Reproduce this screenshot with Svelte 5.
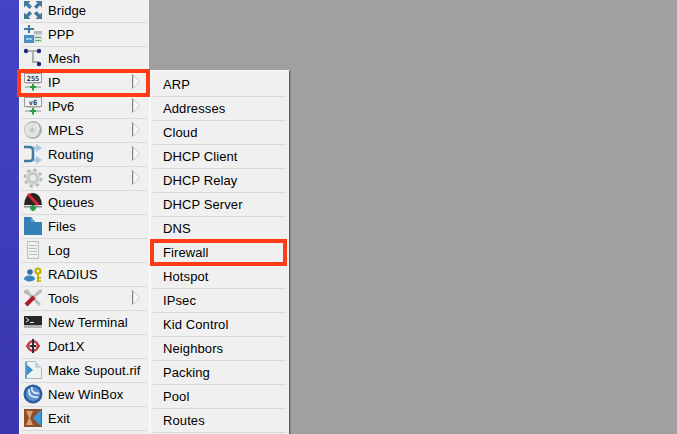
<script>
    // Main menu column, icon is the key into the icon snippet below
    const menu = [
        { label: 'Bridge', icon: 'bridge' },
        { label: 'PPP', icon: 'ppp' },
        { label: 'Mesh', icon: 'mesh' },
        { label: 'IP', icon: 'ip', arrow: true, active: true },
        { label: 'IPv6', icon: 'ipv6', arrow: true },
        { label: 'MPLS', icon: 'mpls', arrow: true },
        { label: 'Routing', icon: 'routing', arrow: true },
        { label: 'System', icon: 'system', arrow: true },
        { label: 'Queues', icon: 'queues' },
        { label: 'Files', icon: 'files' },
        { label: 'Log', icon: 'log' },
        { label: 'RADIUS', icon: 'radius' },
        { label: 'Tools', icon: 'tools', arrow: true },
        { label: 'New Terminal', icon: 'terminal' },
        { label: 'Dot1X', icon: 'dot1x' },
        { label: 'Make Supout.rif', icon: 'supout' },
        { label: 'New WinBox', icon: 'winbox' },
        { label: 'Exit', icon: 'exit' }
    ];

    const submenu = [
        'ARP', 'Addresses', 'Cloud', 'DHCP Client', 'DHCP Relay', 'DHCP Server', 'DNS',
        'Firewall', 'Hotspot', 'IPsec', 'Kid Control', 'Neighbors', 'Packing', 'Pool', 'Routes'
    ];
</script>

{#snippet icon(name)}
    <svg class="icon" width="20" height="20" viewBox="0 0 20 20">
        {#if name === 'bridge'}
            <g fill="#41799e">
                <path d="M1 1h6.500L5.500 3 9 6.500 6.500 9 3 5.500 1 7.500z" />
                <path d="M19 1h-6.500l2 2L11 6.500 13.500 9 17 5.500l2 2z" />
                <path d="M1 19h6.500l-2-2L9 13.500 6.500 11 3 14.500l-2-2z" />
                <path d="M19 19h-6.500l2-2-3.500-3.500 2.500-2.500 3.500 3.500 2-2z" />
            </g>
        {:else if name === 'ppp'}
            <path d="M5 1h2v3h4v2H7v3H5V6H1V4h4z" fill="#41799e" />
            <rect x="11" y="7" width="8" height="3" fill="#b4b9b9" />
            <rect x="10" y="10" width="9" height="9" fill="#dcdfdf" />
            <rect x="1" y="11" width="10" height="8" fill="#4a8fc6" />
            <rect x="3" y="14" width="6" height="2" fill="#9ccbec" />
            <rect x="12" y="13" width="6" height="1" fill="#4fae5a" />
            <rect x="12" y="16" width="6" height="1" fill="#4fae5a" />
        {:else if name === 'mesh'}
            <path d="M3 3h13M10 3v11h6" fill="none" stroke="#a8b0b0" stroke-width="2" />
            <circle cx="3" cy="3" r="2.200" fill="#1c2a80" />
            <circle cx="16" cy="3" r="2.200" fill="#1c2a80" />
            <circle cx="16" cy="16" r="2.200" fill="#1c2a80" />
        {:else if name === 'ip' || name === 'ipv6'}
            <rect x="1.500" y="1.500" width="17" height="9" fill="#f2f2f2" stroke="#9a9a9a" />
            <rect x="3" y="11" width="14" height="1" fill="#c8c8c8" />
            <text class="chip" x="10" y="8.800">{name === 'ip' ? '255' : 'v6'}</text>
            <rect x="2" y="14.500" width="16" height="1" fill="#8a8f8a" />
            <path d="M9 12h2v2h2v2h-2v2.500H9V16H7v-2h2z" fill="#25a03a" />
        {:else if name === 'mpls'}
            <circle cx="10" cy="10" r="9" fill="#a9b2ae" />
            <circle cx="9" cy="10" r="7.500" fill="#dfe3e1" />
            <circle cx="9" cy="10" r="2.500" fill="#c4cac7" />
            <path d="M13 3.500a9 9 0 0 1 3 6" fill="none" stroke="#f6f6f6" stroke-width="1.500" />
        {:else if name === 'routing'}
            <path d="M8 4h6M8 16h6" stroke="#a9c6dd" stroke-width="3" />
            <path d="M13 0l6 4-6 4zM13 12l6 4-6 4z" fill="#a9c6dd" />
            <path d="M1 3h5c3 0 4 1 4 4v6c0 3-1 4-4 4H1" fill="none" stroke="#41799e" stroke-width="2.500" />
        {:else if name === 'system'}
            <circle cx="10" cy="10" r="8" fill="none" stroke="#b4bcb8" stroke-width="3" stroke-dasharray="3.300 3" />
            <circle cx="10" cy="10" r="7" fill="#cdd3d0" />
            <circle cx="10" cy="10" r="4" fill="#e9ecea" stroke="#aeb6b2" />
        {:else if name === 'queues'}
            <path d="M1 13a9 12 0 0 1 18 0z" fill="#2a2224" />
            <path d="M5 2l10 11" stroke="#d8263c" stroke-width="3" />
            <rect x="1" y="14" width="18" height="1.500" fill="#8a8a8a" />
            <path d="M8.500 13h3v1.500h1.500v3h-1.500v1.500h-3v-1.500H7v-3h1.500z" fill="#25a03a" />
        {:else if name === 'files'}
            <path d="M1 1h7l4 5h7v13H1z" fill="#3580b8" />
            <path d="M8 1l4 5H8z" fill="#5f9fcd" />
        {:else if name === 'log'}
            <rect x="4.500" y="1.500" width="11" height="17" fill="#eef1ee" stroke="#b5c0b8" />
            <path d="M6 5.500h8M6 8.500h8M6 11.500h8M6 14.500h8" stroke="#b8c2ba" />
        {:else if name === 'radius'}
            <circle cx="7" cy="8" r="2.800" fill="#2e6fa8" />
            <ellipse cx="6.500" cy="14.500" rx="5.500" ry="3" fill="#3a86c4" />
            <circle cx="15" cy="7" r="3.600" fill="#c4b400" />
            <circle cx="15" cy="7" r="1.300" fill="#efefef" />
            <path d="M14 10h2v8h-2zM16 13h2v1.500h-2zM16 16h2v1.500h-2z" fill="#c4b400" />
        {:else if name === 'tools'}
            <path d="M4 4l13 13M17 3l-6 6" stroke="#b4bdb6" stroke-width="3" />
            <path d="M1 3l3-2 3 3-3 3-3-2zM19 3l-1-2-3 2v3l3-1z" fill="#b4bdb6" />
            <path d="M11 9l-8 8" stroke="#b01c2c" stroke-width="4" />
        {:else if name === 'terminal'}
            <rect x="1" y="4" width="18" height="12" fill="#b0b4b0" />
            <rect x="1" y="4" width="18" height="9" fill="#26282a" />
            <path d="M3 6l3 2-3 2M7 10.500h4" fill="none" stroke="#e8e8e8" />
        {:else if name === 'dot1x'}
            <circle cx="10" cy="10" r="4.800" fill="none" stroke="#c83a48" stroke-width="2.500" />
            <path d="M10 3v14M7 10h6" stroke="#2a3036" stroke-width="2" />
            <path d="M2.500 10l3-3v6zM17.500 10l-3-3v6z" fill="#c83a48" />
        {:else if name === 'supout'}
            <path d="M2.500 1.500h9.500l6.500 7v10h-16z" fill="#eef2f0" stroke="#a8b8c0" />
            <path d="M12 1v7h6z" fill="#c4d4dc" />
            <path d="M3 4l7 6-7 6z" fill="#3a8ec8" />
            <rect x="2" y="2" width="2" height="16" fill="#5aa0d0" />
        {:else if name === 'winbox'}
            <circle cx="10" cy="10" r="9.500" fill="#2a5f9c" />
            <circle cx="10" cy="10" r="7" fill="#5c92cc" />
            <path d="M6 5c-1 6 3 9 9 8M9 3c-1 4 2 7 7 6" fill="none" stroke="#eaf2fa" stroke-width="1.500" />
        {:else if name === 'exit'}
            <rect x="1" y="1" width="18" height="18" fill="#8f4f28" />
            <path d="M3 3h7l-3 7 3 7H3l3-7z" fill="#d9a070" />
            <path d="M10 10l8-8v16z" fill="#3a9ae0" />
        {/if}
    </svg>
{/snippet}

<div class="desktop">
    <div class="sidebar"></div>

    <ul class="menu">
        {#each menu as item}
            <li class="row" class:active={item.active}>
                {@render icon(item.icon)}
                <span>{item.label}</span>
                {#if item.arrow}
                    <svg class="arrow" width="9" height="15" viewBox="0 0 9 15">
                        <path d="M1 1l7 6.500-7 6.500z" fill="#f8f8f8" stroke="#c8c8c8" />
                        <path d="M0.500 0.500v14" stroke="#808080" />
                    </svg>
                {/if}
            </li>
        {/each}
    </ul>

    <ul class="submenu">
        {#each submenu as item}
            <li class="row" class:active={item === 'Firewall'}>{item}</li>
        {/each}
    </ul>
</div>

<style>
    :global(body) {
        margin: 0;
        background: #a0a0a0;
        overflow: hidden;
    }

    ul {
        list-style: none;
        margin: 0;
        padding: 0;
    }

    .desktop {
        display: flex;
        align-items: flex-start;
        height: 434px;
        overflow: hidden;
        font-family: "Liberation Sans", Arial, sans-serif;
        font-size: 13px;
        letter-spacing: 0.1px;
        color: #000;
    }

    .sidebar {
        flex: none;
        width: 19px;
        height: 100%;
        background: linear-gradient(#4343c4, #3a36b0);
    }

    .menu {
        flex: none;
        box-sizing: border-box;
        width: 130px;
        height: 436px;
        margin-top: -1px;
        padding: 0 2px 0 1px;
        background: #f0f0f0;
        border-left: 1px solid #f8f8f8;
    }

    .submenu {
        flex: none;
        box-sizing: border-box;
        width: 141px;
        height: 364px;
        margin-top: 70px;
        padding: 2px 3px 0 2px;
        background: #f0f0f0;
        border-top: 1px solid #fafafa;
        border-left: 2px solid #f8f8f8;
        border-right: 1px solid #606060;
        box-shadow: 1px 0 #858585;
    }

    .row {
        position: relative;
        display: flex;
        align-items: center;
        box-sizing: border-box;
        height: 24px;
        border-bottom: 1px solid #d9d9d9;
    }

    .menu .row {
        padding-left: 2px;
    }

    .submenu .row {
        padding-left: 10px;
    }

    .menu .row span {
        margin-left: 5px;
    }

    .icon {
        flex: none;
        display: block;
        margin-bottom: 1px;
    }

    .chip {
        font-family: "DejaVu Sans Mono", monospace;
        font-size: 7px;
        font-weight: 700;
        letter-spacing: 0;
        text-anchor: middle;
        fill: #333;
    }

    .arrow {
        position: absolute;
        left: 111px;
        top: 3px;
    }

    /* red highlight drawn over the row */
    .active::after {
        content: "";
        position: absolute;
        box-sizing: border-box;
        border: 4px solid #ff3c14;
        pointer-events: none;
    }

    .menu .active::after {
        left: -4px;
        right: -3px;
        top: -2px;
        bottom: -3px;
    }

    .submenu .active::after {
        left: -3px;
        right: -1px;
        top: -2px;
        bottom: -2px;
    }
</style>
